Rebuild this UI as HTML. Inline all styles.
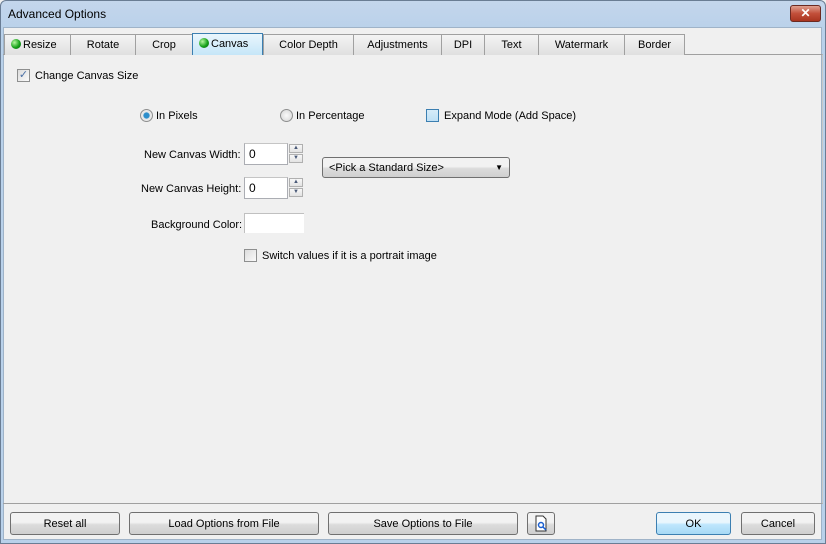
<!DOCTYPE html>
<html><head><style>
*{margin:0;padding:0;box-sizing:border-box}
body{width:826px;height:544px;overflow:hidden;background:#f0f0f0;font-family:"Liberation Sans",sans-serif;font-size:11px;color:#000;position:relative}
.abs{position:absolute}
#frame{left:0;top:0;width:826px;height:544px;border:1px solid #6a7d94;border-radius:6px 6px 0 0;background:linear-gradient(#c4d6ec,#b9d1ea 30px);}
#inner{left:3px;top:27px;width:819px;height:513px;background:#f0f0f0;border:1px solid #9fb3c8}
.tab{position:absolute;top:34px;height:21px;border:1px solid #a0a0a0;border-bottom:none;background:linear-gradient(#f4f4f4,#e0e0e0);text-align:center;line-height:20px;font-size:11px}
.tab.sel{background:linear-gradient(#eaf6fd,#c5e6f8);border-color:#3c7fb1;top:33px;height:22px;line-height:21px}
.dot{display:inline-block;width:10px;height:10px;border-radius:50%;background:radial-gradient(circle at 35% 35%,#b6f7a0,#16a21a 55%,#0b5a0d);vertical-align:-1px;margin-right:2px}
#panel{left:3px;top:54px;width:820px;height:450px;border:1px solid #a0a0a0;border-left:none;border-right:1px solid #c8c8c8}
.btn{position:absolute;top:512px;height:23px;border:1px solid #707070;border-radius:3px;background:linear-gradient(#f2f2f2 45%,#dcdcdc 55%,#cfcfcf);text-align:center;line-height:22px;font-size:11px}
.cb{position:absolute;width:13px;height:13px;border:1px solid #8e8f8f;background:linear-gradient(135deg,#dcdcdc,#fafafa)}
.radio{position:absolute;width:13px;height:13px;border-radius:50%;border:1px solid #8e8f8f;background:radial-gradient(#fafafa,#d4d4d4)}
.txt{position:absolute;background:#fff;border:1px solid #abadb3;border-top-color:#c5c5c5;height:22px;line-height:21px;padding-left:4px;font-size:12px}
.spin{position:absolute;width:14px;height:9px;border:1px solid #b0b0b0;background:linear-gradient(#f7f7f7,#e2e2e2);font-size:6px;color:#4a5a78;text-align:center;line-height:7px}
.l{position:absolute;top:1px}
</style></head><body>
<div id="frame" class="abs"></div>
<div class="abs" style="left:8px;top:7px;font-size:12px">Advanced Options</div>
<div class="abs" style="left:790px;top:5px;width:31px;height:17px;border:1px solid #6b2a22;border-radius:3px;background:linear-gradient(#e0a090,#c24f3a 50%,#a93520);color:#fff;font-weight:bold;text-align:center;line-height:15px;font-size:12px">✕</div>
<div id="inner" class="abs"></div>
<div id="panel" class="abs"></div>
<div class="tab" style="left:4px;width:67px;text-align:left;padding-left:6px"><span class="dot"></span>Resize</div>
<div class="tab" style="left:70px;width:66px">Rotate</div>
<div class="tab" style="left:135px;width:58px">Crop</div>
<div class="tab" style="left:263px;width:91px">Color Depth</div>
<div class="tab" style="left:353px;width:89px">Adjustments</div>
<div class="tab" style="left:441px;width:44px">DPI</div>
<div class="tab" style="left:484px;width:55px">Text</div>
<div class="tab" style="left:538px;width:87px">Watermark</div>
<div class="tab" style="left:624px;width:61px">Border</div>
<div class="tab sel" style="left:192px;width:71px;text-align:left;padding-left:6px"><span class="dot"></span>Canvas</div>

<div class="cb" style="left:17px;top:69px;color:#4a6fa5;font-size:11px;line-height:11px;text-align:center">✓</div>
<div class="abs" style="left:35px;top:70px">Change Canvas Size</div>

<div class="radio" style="left:140px;top:109px;background:radial-gradient(#2d8ecb 35%,#e8e8e8 45%)"></div>
<div class="abs" style="left:156px;top:110px">In Pixels</div>
<div class="radio" style="left:280px;top:109px"></div>
<div class="abs" style="left:296px;top:110px">In Percentage</div>
<div class="cb" style="left:426px;top:109px;border-color:#3c7fb1;background:linear-gradient(#d6ecf9,#bfe0f5)"></div>
<div class="abs" style="left:444px;top:110px">Expand Mode (Add Space)</div>

<div class="abs" style="left:144px;top:149px">New Canvas Width:</div>
<div class="txt" style="left:244px;top:143px;width:44px">0</div>
<div class="spin" style="left:289px;top:144px">▲</div>
<div class="spin" style="left:289px;top:154px">▼</div>
<div class="abs" style="left:141px;top:183px">New Canvas Height:</div>
<div class="txt" style="left:244px;top:177px;width:44px">0</div>
<div class="spin" style="left:289px;top:178px">▲</div>
<div class="spin" style="left:289px;top:188px">▼</div>
<div class="abs" style="left:322px;top:157px;width:188px;height:21px;border:1px solid #707070;border-radius:3px;background:linear-gradient(#f2f2f2 45%,#dcdcdc 55%,#d0d0d0);line-height:20px;padding-left:6px">&lt;Pick a Standard Size&gt;<span style="position:absolute;right:6px;font-size:8px">▼</span></div>
<div class="abs" style="left:151px;top:219px">Background Color:</div>
<div class="abs" style="left:244px;top:213px;width:60px;height:20px;background:#fff;border-left:1px solid #c0c0c0;border-top:1px solid #c0c0c0"></div>
<div class="cb" style="left:244px;top:249px"></div>
<div class="abs" style="left:262px;top:250px">Switch values if it is a portrait image</div>

<div class="btn" style="left:10px;width:110px">Reset all</div>
<div class="btn" style="left:129px;width:190px">Load Options from File</div>
<div class="btn" style="left:328px;width:190px">Save Options to File</div>
<div class="btn" style="left:527px;width:28px"><svg width="14" height="17" style="margin-top:2px" viewBox="0 0 14 17"><path d="M2 1h7l3 3v12H2z" fill="#fff" stroke="#333"/><circle cx="7" cy="10" r="2.5" fill="none" stroke="#1a5fd0" stroke-width="1.5"/><path d="M9 12l3 3" stroke="#1a5fd0" stroke-width="1.5"/></svg></div>
<div class="btn" style="left:656px;width:75px;border-color:#3c7fb1;background:linear-gradient(#eaf6fd 45%,#bee6fd 55%,#a7d9f5)">OK</div>
<div class="btn" style="left:741px;width:74px">Cancel</div>
</body></html>
